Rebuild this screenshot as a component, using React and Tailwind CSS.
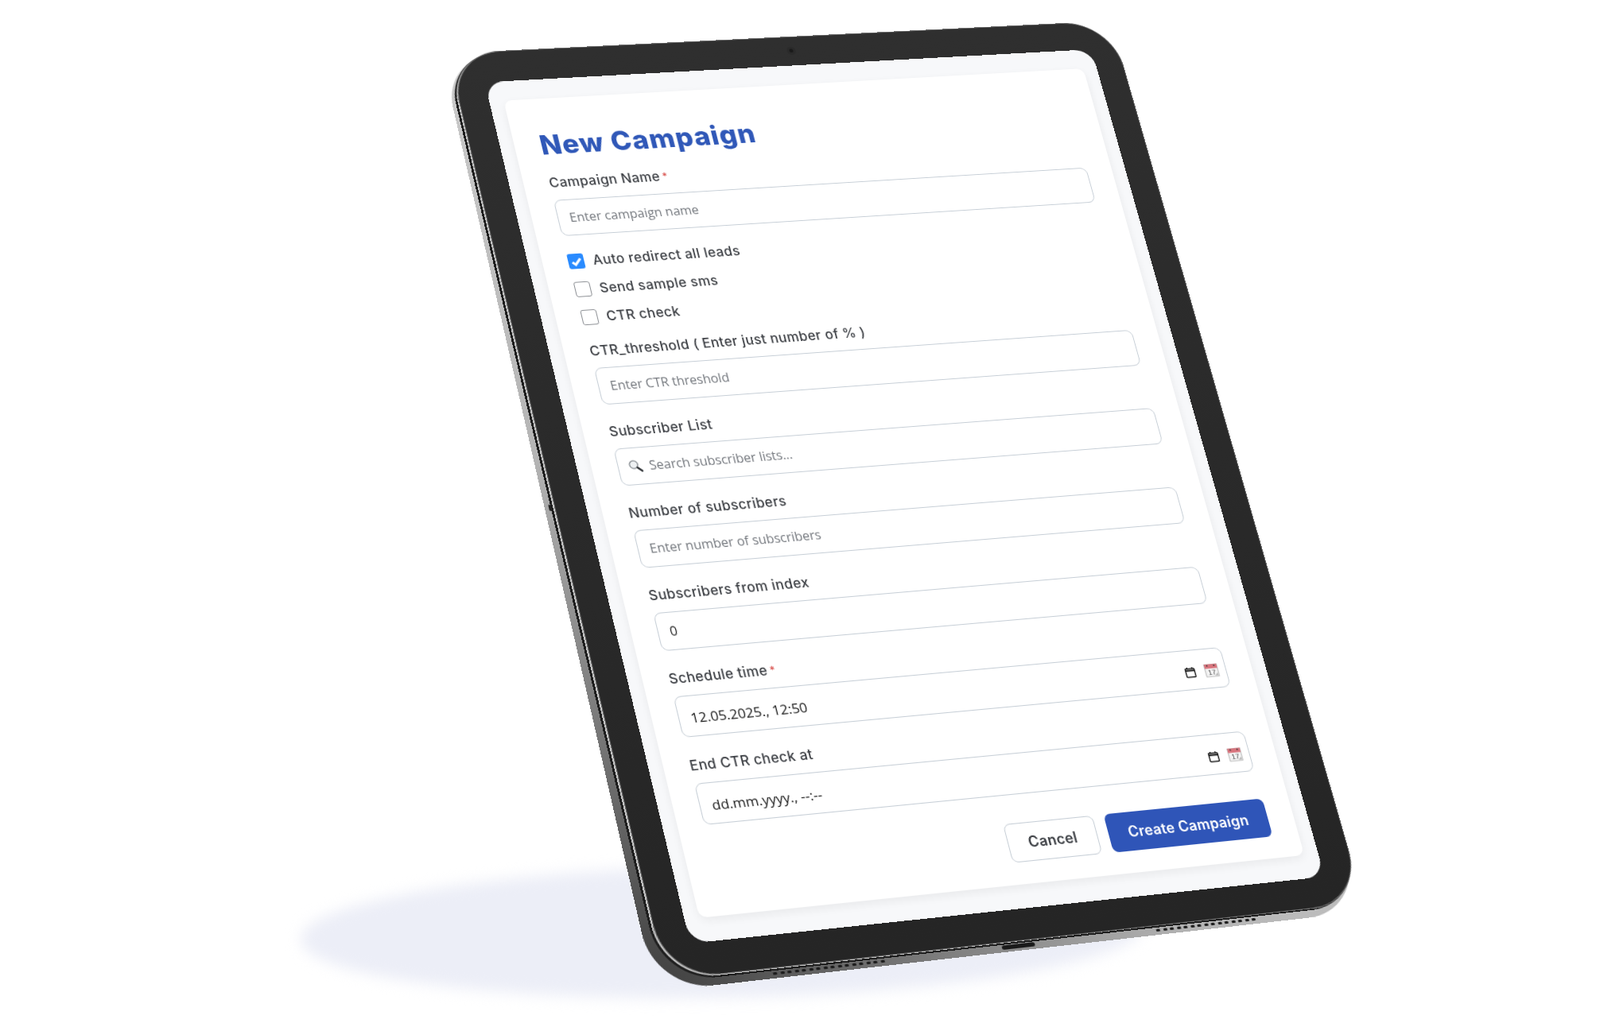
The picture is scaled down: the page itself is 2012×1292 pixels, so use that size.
import React from 'react';

// flat rect (w x h) -> four points on the page
const quad = (p, w, h) => {
  const [[x0, y0], [x1, y1], [x2, y2], [x3, y3]] = p;
  const dx1 = x1 - x2;
  const dx2 = x3 - x2;
  const dx3 = x0 - x1 + x2 - x3;
  const dy1 = y1 - y2;
  const dy2 = y3 - y2;
  const dy3 = y0 - y1 + y2 - y3;
  const den = dx1 * dy2 - dx2 * dy1;
  const g = (dx3 * dy2 - dx2 * dy3) / den;
  const k = (dx1 * dy3 - dx3 * dy1) / den;
  const a = x1 - x0 + g * x1;
  const b = x3 - x0 + k * x3;
  const d = y1 - y0 + g * y1;
  const e = y3 - y0 + k * y3;
  const m = [a / w, d / w, 0, g / w, b / h, e / h, 0, k / h, 0, 0, 1, 0, x0, y0, 0, 1];
  return { transform: `matrix3d(${m.join(',')})` };
};

const BEZEL = [[564, 68], [1396, 27], [1714, 1135], [838, 1232]];
const GLINT = [[561.5, 68.5], [1396, 27], [1714, 1135.5], [835.5, 1234.5]];
const RIM = [[559, 69.5], [1396.5, 26.5], [1714.5, 1137.5], [833, 1237]];
const METAL = [[555, 71], [1397, 26], [1714, 1147], [824, 1248]];
const SCREEN = [[609.5, 103.5], [1372.5, 62], [1666, 1103], [868, 1187]];

const labelCls = "block font-['Inter',sans-serif] font-[450] text-[17px] leading-[22px] tracking-[0.025em] text-[#3a3d42]";
const inputCls = "w-full h-[48px] rounded-[9px] border border-[#c6ced6] bg-white px-[14px] font-['Open_Sans',sans-serif] text-[16px] text-[#222] placeholder:text-[#74787e] outline-none";

const Label = ({ children, required }) => (
  <label className={labelCls}>
    {children}
    {required && <span className="ml-[3px] align-top text-[13px] text-[#d9534f]">*</span>}
  </label>
);

const Check = ({ checked, children }) => (
  <div className="flex items-center gap-[11px]">
    {checked ? (
      <span className="flex h-[20px] w-[20px] items-center justify-center rounded-[3px] bg-[#2a8bff]">
        <svg viewBox="0 0 16 16" className="h-[17px] w-[17px]" fill="none" stroke="#fff" strokeWidth="3">
          <path d="M3 8.5l3.3 3.3L13 4.5" />
        </svg>
      </span>
    ) : (
      <span className="h-[20px] w-[20px] rounded-[3px] border border-[#8c8f94] bg-white" />
    )}
    <span className={labelCls}>{children}</span>
  </div>
);

const SearchGlyph = () => (
  <svg viewBox="0 0 18 18" className="h-[18px] w-[18px] shrink-0">
    <circle cx="7" cy="7" r="5" fill="#eef1f3" stroke="#8f9499" strokeWidth="1.5" />
    <path d="M11 11l5 4.5" stroke="#35383c" strokeWidth="2.6" strokeLinecap="round" />
  </svg>
);

const PickerIcon = () => (
  <svg viewBox="0 0 16 16" className="h-[15px] w-[15px] shrink-0" fill="none" stroke="#1d1d1d" strokeWidth="1.6">
    <rect x="1.8" y="3" width="12.4" height="11.4" rx="1" />
    <path d="M1.8 5.6h12.4" strokeWidth="2.2" />
    <path d="M4.6 1v2.4M11.4 1v2.4" />
  </svg>
);

const CalendarGlyph = () => (
  <svg viewBox="0 0 20 20" className="h-[18px] w-[18px] shrink-0">
    <rect x="1" y="1.5" width="18" height="17.5" fill="#f4f4f4" stroke="#a9a9a9" />
    <rect x="1" y="1.5" width="18" height="6" fill="#d9737c" />
    <circle cx="5" cy="3.5" r="1" fill="#333" />
    <circle cx="15" cy="3.5" r="1" fill="#333" />
    <text x="10" y="16.5" textAnchor="middle" fontSize="10" fontFamily="Liberation Sans" fill="#444">17</text>
    <path d="M13 18l5-4v4z" fill="#b9b9b9" />
  </svg>
);

const DateField = ({ value }) => (
  <div className="flex h-[51px] w-full items-center rounded-[9px] border border-[#c6ced6] bg-white pl-[14px] pr-[9px] pt-[5px]">
    <span className="flex-1 font-['Open_Sans',sans-serif] text-[17px] text-[#1a1a1a]">{value}</span>
    <span className="flex items-center gap-[11px]">
      <PickerIcon />
      <CalendarGlyph />
    </span>
  </div>
);

const Dashes = ({ count, className }) => (
  <div className={`absolute flex gap-[3.5px] ${className}`}>
    {Array.from({ length: count }).map((_, i) => (
      <span key={i} className="h-[3px] w-[5px] rounded-full bg-[#1c1c1c]" />
    ))}
  </div>
);

const App = () => {
  return (
    <div className="relative h-[1292px] w-[2012px] overflow-hidden bg-white">
      {/* floor shadow */}
      <div className="absolute left-[378px] top-[1090px] h-[165px] w-[1060px] -rotate-1 rounded-[50%] bg-[#eceef7] blur-[9px]" />

      {/* metal edge */}
      <div
        className="absolute left-0 top-0 h-[1170px] w-[860px] origin-top-left rounded-[68px] bg-[radial-gradient(circle_at_0%_100%,#3f3f3f_0,#6d6d6d_250px,#b5b5b5_650px,#c8c8c8_1100px)]"
        style={quad(METAL, 860, 1170)}
      >
        <Dashes count={16} className="bottom-[4px] left-[139px]" />
        <Dashes count={15} className="bottom-[4px] left-[602px]" />
        <span className="absolute bottom-[3px] left-[413px] h-[5px] w-[40px] rounded-full bg-[#1a1a1a]" />
        <span className="absolute left-[5px] top-[582px] h-[8px] w-[3px] rounded-full bg-[#222]" />
      </div>
      <div className="absolute left-0 top-0 h-[1170px] w-[860px] origin-top-left rounded-[66px] bg-[#1e1e1e]" style={quad(RIM, 860, 1170)} />
      <div className="absolute left-0 top-0 h-[1170px] w-[860px] origin-top-left rounded-[65px] bg-[#c4c4c4]" style={quad(GLINT, 860, 1170)} />

      {/* bezel */}
      <div
        className="absolute left-0 top-0 h-[1170px] w-[860px] origin-top-left rounded-[64px] bg-gradient-to-b from-[#2f2f2f] to-[#252525] shadow-[0_0_0_1px_#6f6f6f]"
        style={quad(BEZEL, 860, 1170)}
      >
        <span className="absolute left-[429px] top-[16px] h-[5px] w-[5px] rounded-full bg-[#1a1a1a] shadow-[0_0_0_3px_#2a2a2a]" />
      </div>

      {/* screen */}
      <div
        className="absolute left-0 top-0 flex h-[1102px] w-[792px] origin-top-left flex-col rounded-[24px] bg-[#f7f8fa] px-[18px] pb-[29px] pt-[26px]"
        style={quad(SCREEN, 792, 1102)}
      >
        <div className="flex flex-1 flex-col rounded-[10px] bg-white pl-[32px] pr-[33px] pt-[41px] shadow-[0_4px_12px_rgba(0,0,0,0.06)]">
          <h1 className="mb-[19px] font-['Inter',sans-serif] text-[35px] font-extrabold leading-[42px] tracking-[0.03em] text-[#3058b8]">
            New Campaign
          </h1>

          <div className="flex flex-col gap-[12px]">
            <Label required>Campaign Name</Label>
            <input className={inputCls} placeholder="Enter campaign name" readOnly />
          </div>

          <div className="mb-[22px] mt-[23px] flex flex-col gap-[15px]">
            <Check checked>Auto redirect all leads</Check>
            <Check>Send sample sms</Check>
            <Check>CTR check</Check>
          </div>

          <div className="flex flex-col gap-[24px]">
            <div className="flex flex-col gap-[11px]">
              <Label>CTR_threshold ( Enter just number of % )</Label>
              <input className={inputCls} placeholder="Enter CTR threshold" readOnly />
            </div>
            <div className="flex flex-col gap-[11px]">
              <Label>Subscriber List</Label>
              <div className="flex h-[48px] items-center gap-[8px] rounded-[9px] border border-[#c6ced6] bg-white px-[12px]">
                <SearchGlyph />
                <input
                  className="flex-1 bg-transparent font-['Open_Sans',sans-serif] text-[16px] placeholder:text-[#74787e] outline-none"
                  placeholder="Search subscriber lists..."
                  readOnly
                />
              </div>
            </div>
            <div className="flex flex-col gap-[11px]">
              <Label>Number of subscribers</Label>
              <input className={inputCls} placeholder="Enter number of subscribers" readOnly />
            </div>
            <div className="flex flex-col gap-[11px]">
              <Label>Subscribers from index</Label>
              <input className={inputCls} value="0" readOnly />
            </div>
            <div className="flex flex-col gap-[11px]">
              <Label required>Schedule time</Label>
              <DateField value="12.05.2025., 12:50" />
            </div>
            <div className="flex flex-col gap-[11px]">
              <Label>End CTR check at</Label>
              <DateField value="dd.mm.yyyy., --:--" />
            </div>
          </div>

          <div className="mt-[35px] flex justify-end gap-[14px]">
            <button className="h-[48px] w-[113px] rounded-[8px] border border-[#c6ced6] bg-white font-['Inter',sans-serif] text-[18px] font-semibold tracking-[0.01em] text-[#3c3f44]">
              Cancel
            </button>
            <button className="h-[48px] w-[204px] rounded-[8px] bg-[#2f55b8] font-['Inter',sans-serif] text-[18px] font-semibold tracking-[0.01em] text-white">
              Create Campaign
            </button>
          </div>
        </div>
      </div>
    </div>
  );
};

export default App;
